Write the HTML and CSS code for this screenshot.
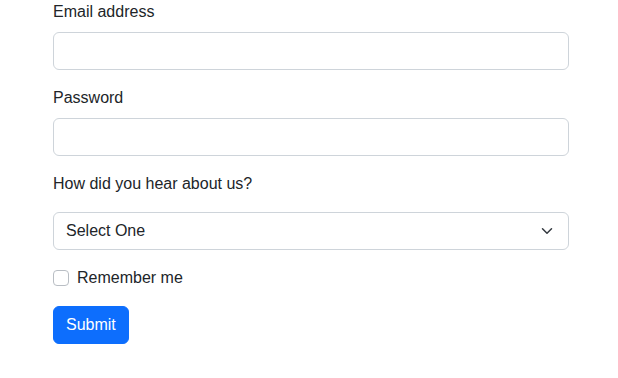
FILE: index.html
```html
<!DOCTYPE html>
<html lang="en">
<head>
<meta charset="utf-8">
<title>Form</title>
<link rel="stylesheet" href="styles.css">
</head>
<body>
<form class="form">
  <div class="field">
    <label class="label" for="email">Email address</label>
    <input class="control" type="email" id="email">
  </div>
  <div class="field">
    <label class="label" for="pw">Password</label>
    <input class="control" type="password" id="pw">
  </div>
  <div class="field">
    <label class="label label-gap" for="src">How did you hear about us?</label>
    <div class="select-wrap">
      <select class="control select" id="src">
        <option>Select One</option>
      </select>
      <svg class="chev" width="16" height="12" viewBox="0 0 16 16"><path d="m2 5 6 6 6-6" fill="none" stroke="#343a40" stroke-linecap="round" stroke-linejoin="round" stroke-width="2"/></svg>
    </div>
  </div>
  <div class="field check">
    <span class="box"></span>
    <label class="check-label">Remember me</label>
  </div>
  <button class="btn" type="button">Submit</button>
</form>
</body>
</html>
```
FILE: styles.css
```css
html, body {
  margin: 0;
  padding: 0;
  background: #fff;
}
body {
  font-family: "Liberation Sans", Arial, sans-serif;
  font-size: 16px;
  line-height: 1.5;
  color: #212529;
}
.form {
  width: 516px;
  margin-left: 53px;
  display: flex;
  flex-direction: column;
}
.field {
  margin-bottom: 16px;
  display: flex;
  flex-direction: column;
}
.label {
  display: block;
  margin-bottom: 8px;
}
.label-gap {
  margin-bottom: 16px;
}
.control {
  box-sizing: border-box;
  display: block;
  width: 100%;
  height: 38px;
  padding: 6px 12px;
  font: inherit;
  color: #212529;
  background: #fff;
  border: 1px solid #ced4da;
  border-radius: 6px;
  margin: 0;
}
.select-wrap {
  position: relative;
}
.select {
  appearance: none;
  -webkit-appearance: none;
  padding-right: 36px;
}
.chev {
  position: absolute;
  right: 14px;
  top: 13px;
  pointer-events: none;
}
.check {
  flex-direction: row;
  align-items: flex-start;
}
.box {
  box-sizing: border-box;
  width: 16px;
  height: 16px;
  margin-top: 4px;
  border: 1px solid #b9bec4;
  border-radius: 4px;
  background: #fff;
  flex: none;
}
.check-label {
  margin-left: 8px;
}
.btn {
  align-self: flex-start;
  box-sizing: border-box;
  height: 38px;
  padding: 6px 12px;
  font: inherit;
  color: #fff;
  background: #0d6efd;
  border: 1px solid #0d6efd;
  border-radius: 6px;
}
```
